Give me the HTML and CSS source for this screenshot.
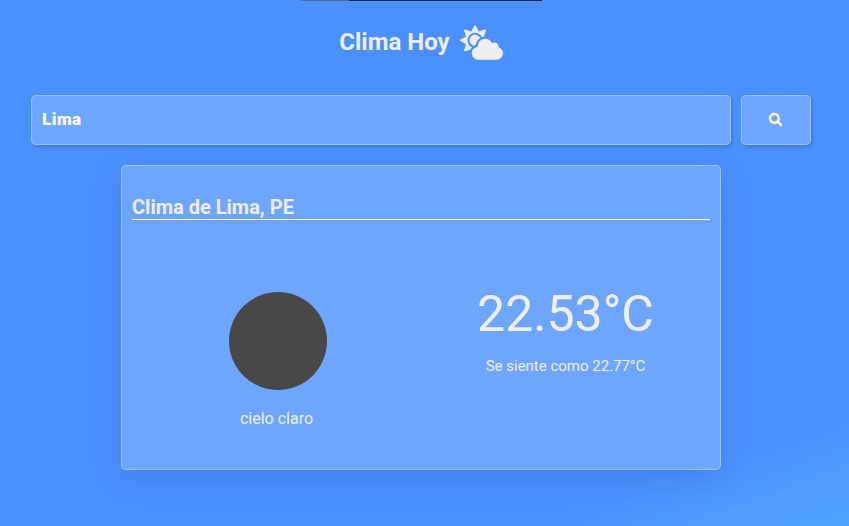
FILE: index.html
```html
<!DOCTYPE html>
<html lang="es">
<head>
<meta charset="utf-8">
<title>Clima Hoy</title>
<link rel="stylesheet" href="styles.css">
</head>
<body>
<div class="top-edge"></div>
<main class="app">
  <header class="header">
    <h1 class="title">Clima Hoy</h1>
    <svg class="cloud-sun" viewBox="0 0 640 512" aria-hidden="true"><path fill="currentColor" d="M575.2 325.7c.2-1.9.8-3.7.8-5.6 0-35.3-28.7-64-64-64-12.6 0-24.2 3.8-34.1 10-17.6-38.8-56.5-66-101.9-66-61.8 0-112 50.1-112 112 0 3 .7 5.8.9 8.7-49.6 3.7-88.9 44.7-88.9 95.3 0 53 43 96 96 96h272c53 0 96-43 96-96 0-42.1-27.2-77.4-64.8-90.4zm-430.4-22.6c-43.7-43.7-43.7-114.7 0-158.3 43.7-43.7 114.7-43.7 158.4 0 9.7 9.7 16.9 20.9 22.3 32.7 9.8-3.7 20.1-6 30.7-7.5L386 81.1c4-11.9-7.3-23.1-19.2-19.2L279 91.2 237.5 8.4C232-2.8 216-2.8 210.4 8.4L169 91.2 81.1 61.9C69.3 58 58 69.3 61.9 81.1l29.3 87.8-82.8 41.5c-11.2 5.6-11.2 21.5 0 27.1l82.8 41.4-29.3 87.8c-4 11.9 7.3 23.1 19.2 19.2l76.1-25.3c6.1-12.4 14-23.7 23.6-33.5-13.1-5.4-25.4-13.4-36-24zm-4.8-79.2c0 40.8 29.3 74.8 67.9 82.3 8-4.7 16.3-8.8 25.2-11.7 5.4-44.3 31-82.5 67.4-105C287.3 160.4 258 140 224 140c-46.3 0-84 37.6-84 83.9z"/></svg>
  </header>
  <form class="search">
    <input class="glass search-input" type="text" value="Lima" aria-label="Ciudad">
    <button class="glass search-button" type="button" aria-label="Buscar">
      <svg class="search-icon" viewBox="0 0 512 512"><path fill="currentColor" stroke="currentColor" stroke-width="16" d="M505 442.7L405.3 343c-4.500-4.500-10.600-7-17-7H372c27.600-35.300 44-79.700 44-128C416 93.100 322.900 0 208 0S0 93.100 0 208s93.100 208 208 208c48.300 0 92.700-16.400 128-44v16.300c0 6.400 2.500 12.500 7 17l99.700 99.700c9.400 9.400 24.600 9.400 33.900 0l28.300-28.300c9.400-9.400 9.400-24.600.1-34zM208 336c-70.700 0-128-57.200-128-128 0-70.700 57.200-128 128-128 70.700 0 128 57.200 128 128 0 70.700-57.200 128-128 128z"/></svg>
    </button>
  </form>
  <section class="glass card">
    <h2 class="card-title">Clima de Lima, PE</h2>
    <div class="card-body">
      <div class="sky">
        <div class="sky-disc"></div>
        <p class="sky-text">cielo claro</p>
      </div>
      <div class="temp">
        <p class="temp-value">22.53°C</p>
        <p class="temp-feels">Se siente como 22.77°C</p>
      </div>
    </div>
  </section>
</main>
</body>
</html>
```
FILE: styles.css
```css
* { box-sizing: border-box; margin: 0; padding: 0; }

body {
  height: 526px;
  overflow: hidden;
  font-family: Roboto, "Liberation Sans", sans-serif;
  color: #eee;
  background: linear-gradient(160deg, #4a90ff 85.5%, #50a4ff 99%);
}

.top-edge {
  position: absolute;
  top: 0;
  left: 301px;
  width: 241px;
  height: 1px;
  background: linear-gradient(90deg, #56698c 48px, #14284c 48px);
}

.app { padding: 25px 38px 0 31px; }

.header {
  display: flex;
  justify-content: center;
  height: 35px;
  gap: 10px;
}

.title { font-size: 24px; line-height: 34px; }
.cloud-sun { width: 43px; height: 35px; }

.glass {
  background: rgba(255, 255, 255, 0.2);
  border: 1px solid rgba(255, 255, 255, 0.3);
  border-radius: 5px;
}

.search { display: flex; gap: 10px; margin-top: 35px; }

.search-input,
.search-button {
  height: 50px;
  color: #fff;
  box-shadow: 2px 2px 3px rgba(0, 0, 0, 0.15);
}

.search-input {
  width: 700px;
  padding: 0 10px 2px;
  font: 900 17px Roboto, sans-serif;
  letter-spacing: 0.5px;
  outline: none;
}

.search-button {
  display: flex;
  align-items: center;
  justify-content: center;
  width: 70px;
}

.search-icon { width: 13.33px; height: 13.33px; overflow: visible; }

.card {
  width: 600px;
  height: 305px;
  margin: 20px auto 0;
  padding: 29px 10px 0;
  box-shadow: 0 8px 32px rgba(0, 0, 0, 0.1);
}

.card-title {
  height: 25px;
  font-size: 20px;
  line-height: 24px;
  border-bottom: 1px solid #fff;
}

.card-body {
  display: grid;
  grid-template-columns: 1fr 1fr;
  text-align: center;
}

.sky { padding: 72px 0 0 2px; }
.sky-disc { width: 98px; height: 98px; margin: 0 auto; border-radius: 50%; background: #484848; }
.sky-text { margin: 19px 2px 0 0; font-size: 16px; line-height: 20px; }

.temp { padding-top: 64px; }
.temp-value { font-size: 50px; line-height: 60px; }
.temp-feels { margin-top: 12px; font-size: 15px; line-height: 20px; }
```
